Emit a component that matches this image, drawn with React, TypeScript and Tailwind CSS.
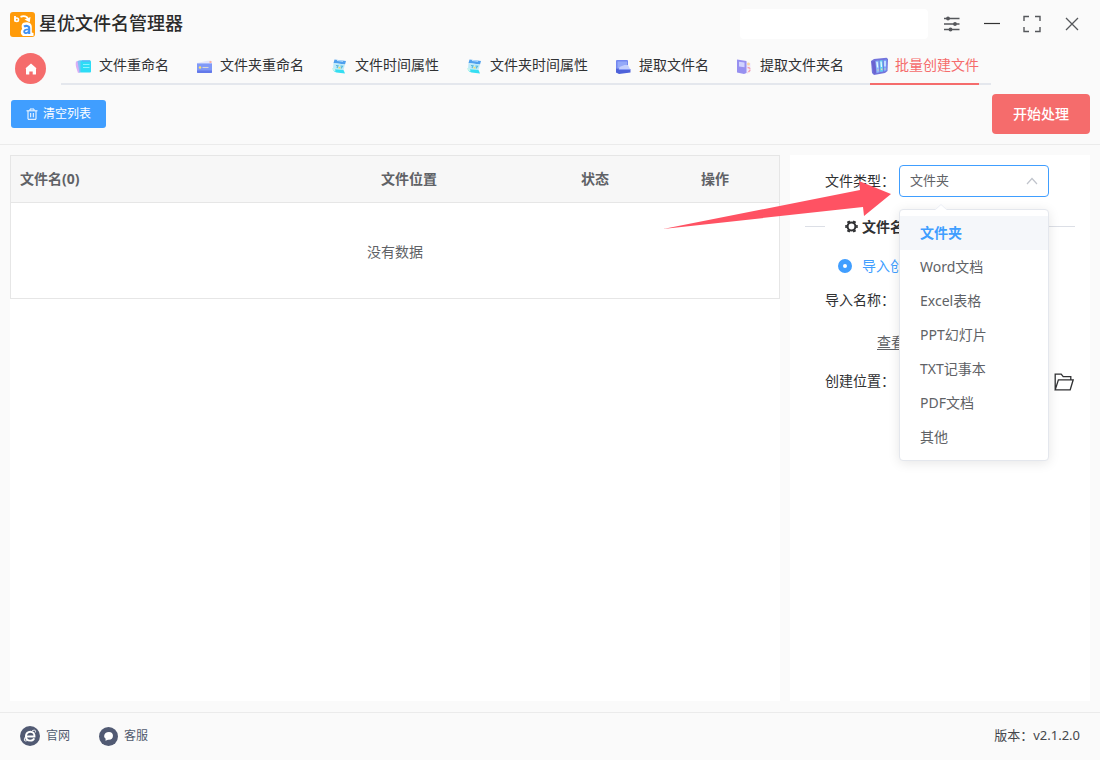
import { useState } from "react";
import type { ReactNode } from "react";

function AppLogo() {
  return (
    <svg viewBox="0 0 25 25" className="size-[25px] shrink-0" aria-hidden="true">
      <rect width="25" height="25" rx="3" fill="#ff9b0a" />
      <path d="M5 4v5.500" stroke="#fff" strokeWidth="1.800" />
      <circle cx="6.800" cy="7.700" r="1.700" fill="none" stroke="#fff" strokeWidth="1.600" />
      <path d="M10.500 4.800c3.500-1.300 6.500-.3 7.500 2" fill="none" stroke="#fff" strokeWidth="1.900" />
      <path d="M14.500 7.600l6-2.600-.8 5.200z" fill="#fff" />
      <path d="M13.500 10.800c3-1.300 8.300-.6 8.300 4.200v5.500l1.700.5V24H13c-2.500-1.500-3-5-.8-7-1-2.500-.8-5.200 1.300-6.200z" fill="#fff" />
      <path d="M14 14.700c1.700-1.300 5.200-1.200 5.200 1.500v5.700" fill="none" stroke="#3f90f2" strokeWidth="2.100" />
      <path d="M18.800 17.400c-2.500 0-4.600.2-4.600 2.100 0 2.200 3.800 2.200 4.800-.5" fill="none" stroke="#3f90f2" strokeWidth="1.900" />
    </svg>
  );
}

function RenameIcon() {
  return (
    <svg viewBox="0 0 18 18" className="size-[18px]" aria-hidden="true">
      <path d="M2 4.500l4-1 2 11-4 1.500C3 12 1 9 2 4.500z" fill="#d9aef5" />
      <path d="M3.500 4L7.500 3v12l-2 1z" fill="#7fc0f7" />
      <rect x="6.500" y="3.500" width="10.500" height="12" rx="1" fill="#2ddcf6" />
      <path d="M8 4h8" stroke="#58b4f8" strokeWidth="1.500" />
      <path d="M9 7.500h6.500M9 10.500h6.500" stroke="#8cf2ff" strokeWidth="1.200" />
    </svg>
  );
}

function FolderCardIcon() {
  return (
    <svg viewBox="0 0 18 18" className="size-[18px]" aria-hidden="true">
      <path d="M2 6l9-2 5-.5.500 3z" fill="#e3e6fb" />
      <path d="M14.500 4h2v2h-2z" fill="#f7b0a8" />
      <rect x="2" y="6" width="15" height="10" rx="1" fill="#8099f7" />
      <path d="M2 13.500h15V15a1 1 0 0 1-1 1H3a1 1 0 0 1-1-1z" fill="#6379ea" />
      <circle cx="5" cy="10.500" r="1.200" fill="#ffe36b" />
      <path d="M7.500 10.500h6" stroke="#d9d8cf" strokeWidth="1.100" />
      <path d="M2 6.500h15" stroke="#a9bafb" strokeWidth="1" />
    </svg>
  );
}

function CalendarIcon() {
  return (
    <svg viewBox="0 0 18 18" className="size-[18px]" aria-hidden="true">
      <path d="M4.500 2.500L16 4l-1 3.500L3.500 6z" fill="#4fa0ee" />
      <path d="M3.500 6L15 7.500 13.500 13 3 12z" fill="#bdeafa" />
      <path d="M3 12l10.500 1 1.500 3.500-8.500-1C4.500 15 3 14 3 12z" fill="#35def2" />
      <path d="M2 11l3 .5.500 3C3.500 14 2 12.800 2 11z" fill="#c7f5ec" />
      <path d="M6 8.500l2 .3-1 2.200M10.500 9l2 .3-1.500 2" fill="none" stroke="#56b9dc" strokeWidth="1.200" />
      <path d="M8.500 10.500l2 .5" stroke="#f1dc6d" strokeWidth="1.800" />
      <path d="M7 3.500l6 .8" stroke="#c6e6ff" strokeWidth="1.100" />
    </svg>
  );
}

function ExtractIcon() {
  return (
    <svg viewBox="0 0 18 18" className="size-[18px]" aria-hidden="true">
      <rect x="2" y="3" width="12" height="12.500" rx="1" fill="#7387f0" />
      <path d="M3.500 4.500H13V9L6 11H3.500z" fill="#94a9f8" />
      <path d="M5.500 10l5-2h3.500l2 4H5z" fill="#c3cffd" />
      <path d="M2 11.500l3 1h11.500v3l-11.500 1.500-3-1.500z" fill="#4e62da" />
      <path d="M5 12.500h11.500" stroke="#8498f5" strokeWidth="1" />
    </svg>
  );
}

function ExtractFolderIcon() {
  return (
    <svg viewBox="0 0 18 18" className="size-[18px]" aria-hidden="true">
      <path d="M11 5l4.500 1v9l-5 1z" fill="#f0eafb" />
      <path d="M2 2.500L11.500 4v12L9 17l-7-1.500z" fill="#9790f0" />
      <path d="M4 4.700l5.500.8v4.800L4 9.500z" fill="#d2d3ff" />
      <circle cx="13.500" cy="7" r="1.500" fill="#fbd8a0" />
      <path d="M12.500 10.500c3 0 3.500 2 1.500 4l-1.500 1.500" fill="none" stroke="#f5a0ac" strokeWidth="1.400" strokeDasharray="3 1" />
    </svg>
  );
}

function BinderIcon() {
  return (
    <svg viewBox="0 0 18 18" className="size-[18px]" aria-hidden="true">
      <path d="M1 4l3-2L16.500.8 18 2l-.5 12-2.500 2-11 2-2-2z" fill="#7374dc" />
      <path d="M1.500 4.500L5 4l1.300 12-2.500 1z" fill="#6b62cf" />
      <path d="M5.500 4l3-.5 1 11.700-3 .8z" fill="#8eb9fb" />
      <path d="M9.500 3.500l3-.5.700 11.500-3 .5z" fill="#62cdf0" />
      <path d="M13.500 3l3-.5v11l-2.500 1z" fill="#79a7fb" />
      <path d="M7 5l.6 5.500M11 4.500l.5 5.500M15 4v5.500" stroke="#e5fbff" strokeWidth="1.300" />
      <path d="M8 12.500v1M11.700 11.500v1.500M15 11.500v1" stroke="#f0e29c" strokeWidth="1.200" />
    </svg>
  );
}

const tabs: { label: string; icon: ReactNode }[] = [
  { label: "文件重命名", icon: <RenameIcon /> },
  { label: "文件夹重命名", icon: <FolderCardIcon /> },
  { label: "文件时间属性", icon: <CalendarIcon /> },
  { label: "文件夹时间属性", icon: <CalendarIcon /> },
  { label: "提取文件名", icon: <ExtractIcon /> },
  { label: "提取文件夹名", icon: <ExtractFolderIcon /> },
  { label: "批量创建文件", icon: <BinderIcon /> },
];

const fileTypes = ["文件夹", "Word文档", "Excel表格", "PPT幻灯片", "TXT记事本", "PDF文档", "其他"];

function TitleBar() {
  return (
    <header className="flex h-12 items-center pl-[10px] pr-4">
      <AppLogo />
      <h1 className="ml-1 pb-[2px] text-[18px] font-medium text-[#2b2b2b]">星优文件名管理器</h1>
      <div className="ml-auto mr-3 h-[30px] w-[188px] rounded bg-white" />
      <div className="flex items-center gap-4 text-[#55575b]">
        <button aria-label="设置" className="grid size-6 place-items-center">
          <svg viewBox="0 0 18 18" className="size-[18px]" fill="none" stroke="currentColor" strokeWidth="1.300">
            <path d="M1 3.500h15.500M1 9h15.500M1 14.500h15.500" />
            <g fill="currentColor" stroke="none">
              <circle cx="5" cy="3.500" r="1.900" />
              <circle cx="12" cy="9" r="1.900" />
              <circle cx="7.500" cy="14.500" r="1.900" />
            </g>
          </svg>
        </button>
        <button aria-label="最小化" className="grid size-6 place-items-center">
          <svg viewBox="0 0 18 18" className="size-[18px]" stroke="#333" strokeWidth="1.200">
            <path d="M1 8.500h16" />
          </svg>
        </button>
        <button aria-label="最大化" className="grid size-6 place-items-center">
          <svg viewBox="0 0 18 18" className="size-[18px]" fill="none" stroke="currentColor" strokeWidth="1.400">
            <path d="M1 6V1.500h5M12 1.500h5V6M17 12v4.500h-5M6 16.500H1V12" />
          </svg>
        </button>
        <button aria-label="关闭" className="grid size-6 place-items-center">
          <svg viewBox="0 0 18 18" className="size-[18px]" fill="none" stroke="currentColor" strokeWidth="1.300">
            <path d="M3 3l12 12M15 3L3 15" />
          </svg>
        </button>
      </div>
    </header>
  );
}

function NavTabs() {
  const [active, setActive] = useState(6);
  return (
    <div className="flex h-[37px] items-end pl-[15px]">
      <button aria-label="首页" className="mb-px grid size-[31px] shrink-0 place-items-center rounded-full bg-[#f56c6c]">
        <svg viewBox="0 0 12 12" className="size-3" fill="#fff">
          <path d="M6 .5L.3 5.500h.7V11c0 .4.200.6.600.6h2.700V8.500h3.400v3.100h2.700c.4 0 .6-.2.600-.6V5.500h.7z" />
        </svg>
      </button>
      <nav className="ml-[15px] flex h-full gap-[26px] border-b-2 border-[#e4e7ed] pl-[13px] pr-3">
        {tabs.map((tab, i) => (
          <button
            key={tab.label}
            onClick={() => setActive(i)}
            className={
              "mb-[-2px] flex items-center gap-[7px] whitespace-nowrap border-b-2 text-[14px] " +
              (i === active ? "border-[#f56c6c] text-[#f56c6c]" : "border-transparent text-[#303133]")
            }
          >
            {tab.icon}
            <span className="pb-[2px]">{tab.label}</span>
          </button>
        ))}
      </nav>
    </div>
  );
}

function Toolbar() {
  return (
    <div className="flex h-[60px] items-center justify-between border-b border-[#ebebeb] pb-px pl-[11px] pr-[10px]">
      <button className="flex h-7 items-center gap-[5px] rounded-[3px] bg-[#409eff] px-[15px] text-[12px] text-white">
        <svg viewBox="0 0 12 12" className="size-3" fill="none" stroke="currentColor">
          <path d="M.5 2.800h11M4 2.500V1h4v1.500M2 3v8.300h8V3M4.700 5v4.300M7.300 5v4.300" />
        </svg>
        清空列表
      </button>
      <button className="h-10 rounded bg-[#f56c6c] px-[21px] pb-[2px] text-[14px] font-medium text-white">开始处理</button>
    </div>
  );
}

function FileTable() {
  return (
    <section className="min-w-0 flex-1 bg-white">
      <table className="w-full table-fixed border-separate border-spacing-0 border border-[#e6e6e6] text-[14px] text-[#606266]">
        <colgroup>
          <col />
          <col className="w-[252px]" />
          <col className="w-[120px]" />
          <col className="w-[124px]" />
        </colgroup>
        <thead>
          <tr className="h-[47px] bg-[#f7f7f7]">
            <th className="border-b border-[#e6e6e6] pb-[2px] pl-[9px] text-left font-bold">文件名(0)</th>
            <th className="border-b border-[#e6e6e6] pb-[2px] font-bold">文件位置</th>
            <th className="border-b border-[#e6e6e6] pb-[2px] font-bold">状态</th>
            <th className="border-b border-[#e6e6e6] pb-[2px] pr-1 font-bold">操作</th>
          </tr>
        </thead>
        <tbody>
          <tr className="h-[95px]">
            <td colSpan={4} className="pt-[2px] text-center">
              没有数据
            </td>
          </tr>
        </tbody>
      </table>
    </section>
  );
}

function TypeSelect() {
  const [value, setValue] = useState("文件夹");
  return (
    <div className="relative w-[150px]">
      <select
        id="file-type"
        value={value}
        onChange={(e) => setValue(e.target.value)}
        className="block h-8 w-full appearance-none rounded border border-[#409eff] bg-white pl-[10px] pr-8 text-[13px] text-[#606266] outline-none"
      >
        {fileTypes.map((t) => (
          <option key={t}>{t}</option>
        ))}
      </select>
      <svg viewBox="0 0 12 12" className="pointer-events-none absolute right-[11px] top-[10px] size-3" fill="none" stroke="#c0c4cc" strokeWidth="1.200">
        <path d="M1 9l5-5.500L11 9" />
      </svg>
      <div className="absolute left-0 top-11 z-10 w-full rounded border border-[#e4e7ed] bg-white py-[6px] shadow-[0_2px_12px_rgba(0,0,0,0.1)]">
        <svg viewBox="0 0 12 6" className="absolute left-[35px] top-[-6px] h-[6px] w-3">
          <path d="M0 6L6 .5 12 6" fill="#fff" stroke="#ebeef5" />
        </svg>
        <ul>
          {fileTypes.map((t) => (
            <li key={t}>
              <button
                onClick={() => setValue(t)}
                className={
                  "block h-[34px] w-full px-5 pb-[2px] text-left text-[14px] " +
                  (t === value ? "bg-[#f5f7fa] font-bold text-[#409eff]" : "text-[#606266]")
                }
              >
                {t}
              </button>
            </li>
          ))}
        </ul>
      </div>
    </div>
  );
}

function SettingsPanel() {
  return (
    <aside className="relative w-[300px] shrink-0 bg-white px-[15px] pt-[10px] text-[14px] text-[#303133]">
      <div className="flex h-8 items-center pl-5">
        <label htmlFor="file-type" className="w-[74px] whitespace-nowrap pb-[2px]">
          文件类型：
        </label>
        <TypeSelect />
      </div>

      <div className="mt-[17px] flex h-6 items-center">
        <span className="h-px w-5 bg-[#dcdfe6]" />
        <h2 className="ml-5 flex items-center gap-1 font-bold">
          <svg viewBox="0 0 14 14" className="size-[13px]" fill="none" stroke="#303133">
            <circle cx="7" cy="7" r="4.200" strokeWidth="2.200" />
            <path d="M3.400 1.200l1 1.800M10.600 1.200l-1 1.800M.3 7h1.700M12 7h1.700M3.400 12.800l1-1.800M10.600 12.800l-1-1.800" strokeWidth="3.200" />
          </svg>
          文件名
        </h2>
        <span className="ml-5 h-px flex-1 bg-[#dcdfe6]" />
      </div>

      <label className="mt-4 flex h-6 items-center gap-[10px] pl-[33px] text-[#409eff]">
        <input
          type="radio"
          defaultChecked
          className="m-0 size-[14px] appearance-none rounded-full border-[5px] border-[#409eff] bg-white"
        />
        <span className="pb-[2px]">导入创</span>
      </label>

      <div className="mt-[9px] flex h-6 items-center pl-5">导入名称：</div>
      <div className="mt-[18px] flex h-6 items-center pl-[72px]">
        <a href="#example" className="text-[#606266] underline underline-offset-2">
          查看
        </a>
      </div>
      <div className="mt-[15px] flex h-6 items-center justify-between pl-5 pr-px">
        创建位置：
        <button aria-label="选择文件夹" className="pt-[4px]">
          <svg viewBox="0 0 20 18" className="h-[18px] w-5" fill="none" stroke="#303133" strokeWidth="1.300">
            <path d="M1.200 16.800V1.200h6l2 2.500h7.600v3.100M1.200 16.800L4.400 6.800h14.800l-3 10z" />
          </svg>
        </button>
      </div>

      <svg
        viewBox="0 0 228 48"
        className="pointer-events-none absolute left-[-127px] top-[26px] z-20 h-12 w-[228px]"
        fill="#ff5263"
        aria-hidden="true"
      >
        <path d="M0 48L197 9 196 0 228 13 201 35 200 26z" />
      </svg>
    </aside>
  );
}

function Footer() {
  return (
    <footer className="flex h-12 items-center border-t border-[#ebebeb] px-5 pb-px text-[12px] text-[#515a6e]">
      <a href="#site" className="flex items-center gap-[6px]">
        <svg viewBox="0 0 20 20" className="size-5" fill="none">
          <circle cx="10" cy="10" r="10" fill="#515a73" />
          <path d="M6.300 10.500h8.200c.2-3-1.700-4.800-4.200-4.800-2.600 0-4.400 1.900-4.400 4.500s1.800 4.400 4.400 4.400c1.800 0 3.200-.8 3.900-2.300" stroke="#fff" strokeWidth="1.900" />
          <path d="M12 5c2.500-1.500 4.300-.8 3.300 1.500M6 10c-2.500 3.500-2.300 6.300 1.500 4.300" stroke="#fff" strokeWidth="1" />
        </svg>
        官网
      </a>
      <a href="#support" className="ml-[29px] flex items-center gap-[6px]">
        <svg viewBox="0 0 20 20" className="size-[19px]">
          <circle cx="10" cy="10" r="10" fill="#515a73" />
          <path d="M10.500 5.300c2.700 0 4.200 1.700 4.200 4 0 2.500-1.700 4.200-4.200 4.200-.3 0-.7 0-1-.1l-2.700 1.100.2-2.200C5.900 11.700 5.400 10.700 5.400 9.600c0-2.600 2.300-4.300 5.100-4.300z" fill="#fff" />
        </svg>
        客服
      </a>
      <span className="ml-auto text-[13px] text-[#45474b]">版本：v2.1.2.0</span>
    </footer>
  );
}

export default function App() {
  return (
    <div className="flex min-h-screen flex-col bg-[#fafafa] font-['Noto_Sans','Noto_Sans_CJK_SC',sans-serif]">
      <TitleBar />
      <NavTabs />
      <Toolbar />
      <main className="flex flex-1 gap-[10px] px-[10px] pb-[11px] pt-[10px]">
        <FileTable />
        <SettingsPanel />
      </main>
      <Footer />
    </div>
  );
}
